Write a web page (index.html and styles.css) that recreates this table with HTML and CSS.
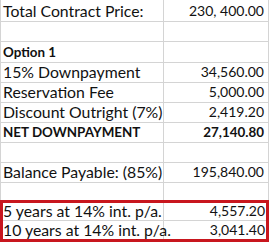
FILE: index.html
```html
<!DOCTYPE html>
<html>
<head>
<meta charset="utf-8">
<link rel="stylesheet" href="styles.css">
</head>
<body>
<div class="sheet">
  <div class="row r1"><div class="c label">Total Contract Price:</div><div class="c num">230, 400.00</div></div>
  <div class="row r2"><div class="c label"></div><div class="c num"></div></div>
  <div class="row r3"><div class="c label b">Option 1</div><div class="c num"></div></div>
  <div class="row"><div class="c label">15% Downpayment</div><div class="c num">34,560.00</div></div>
  <div class="row"><div class="c label">Reservation Fee</div><div class="c num">5,000.00</div></div>
  <div class="row"><div class="c label">Discount Outright (7%)</div><div class="c num">2,419.20</div></div>
  <div class="row"><div class="c label b">NET DOWNPAYMENT</div><div class="c num b">27,140.80</div></div>
  <div class="row"><div class="c label"></div><div class="c num"></div></div>
  <div class="row"><div class="c label">Balance Payable: (85%)</div><div class="c num">195,840.00</div></div>
  <div class="row r10"><div class="c label"></div><div class="c num"></div></div>
  <div class="box">
    <div class="row br1"><div class="c label">5 years at 14% int. p/a.</div><div class="c num">4,557.20</div></div>
    <div class="row br2"><div class="c label">10 years at 14% int. p/a.</div><div class="c num">3,041.40</div></div>
  </div>
</div>
</body>
</html>
```
FILE: styles.css
```css
html, body {
  margin: 0;
  padding: 0;
  background: #ffffff;
}
body {
  font-family: Lato, "Open Sans", sans-serif;
  font-size: 15.8px;
  color: #111;
}
.sheet {
  width: 269px;
}
.row {
  display: flex;
  height: 20px;
  box-sizing: border-box;
  border-bottom: 1px solid #d4d4d4;
}
.row.r1 { height: 22px; }
.row.r3 { height: 21px; }
.row.r10 { height: 17px; border-bottom: none; }
.c {
  box-sizing: border-box;
  display: flex;
  align-items: flex-end;
  line-height: 16px;
  padding-bottom: 2px;
  white-space: nowrap;
  overflow: visible;
}
.label {
  width: 164px;
  border-left: 1px solid #d4d4d4;
  border-right: 1px solid #d4d4d4;
  padding-left: 2px;
}
.num {
  flex: 1;
  justify-content: flex-end;
  border-right: 1px solid #d4d4d4;
  padding-right: 4px;
  font-size: 14px;
}
.b { font-weight: 700; }
.label.b { font-size: 13.4px; }
.num.b { font-size: 13.4px; }
.box {
  border: 3px solid #c8161e;
  height: 42px;
  box-sizing: border-box;
}
.box .label {
  width: 161px;
  border-left: none;
  padding-left: 0;
}
.box .num {
  border-right: none;
  padding-right: 1px;
}
.box .c { padding-bottom: 1px; }
.row.br1 { height: 18px; }
.row.br2 { height: 18px; border-bottom: none; }
```
